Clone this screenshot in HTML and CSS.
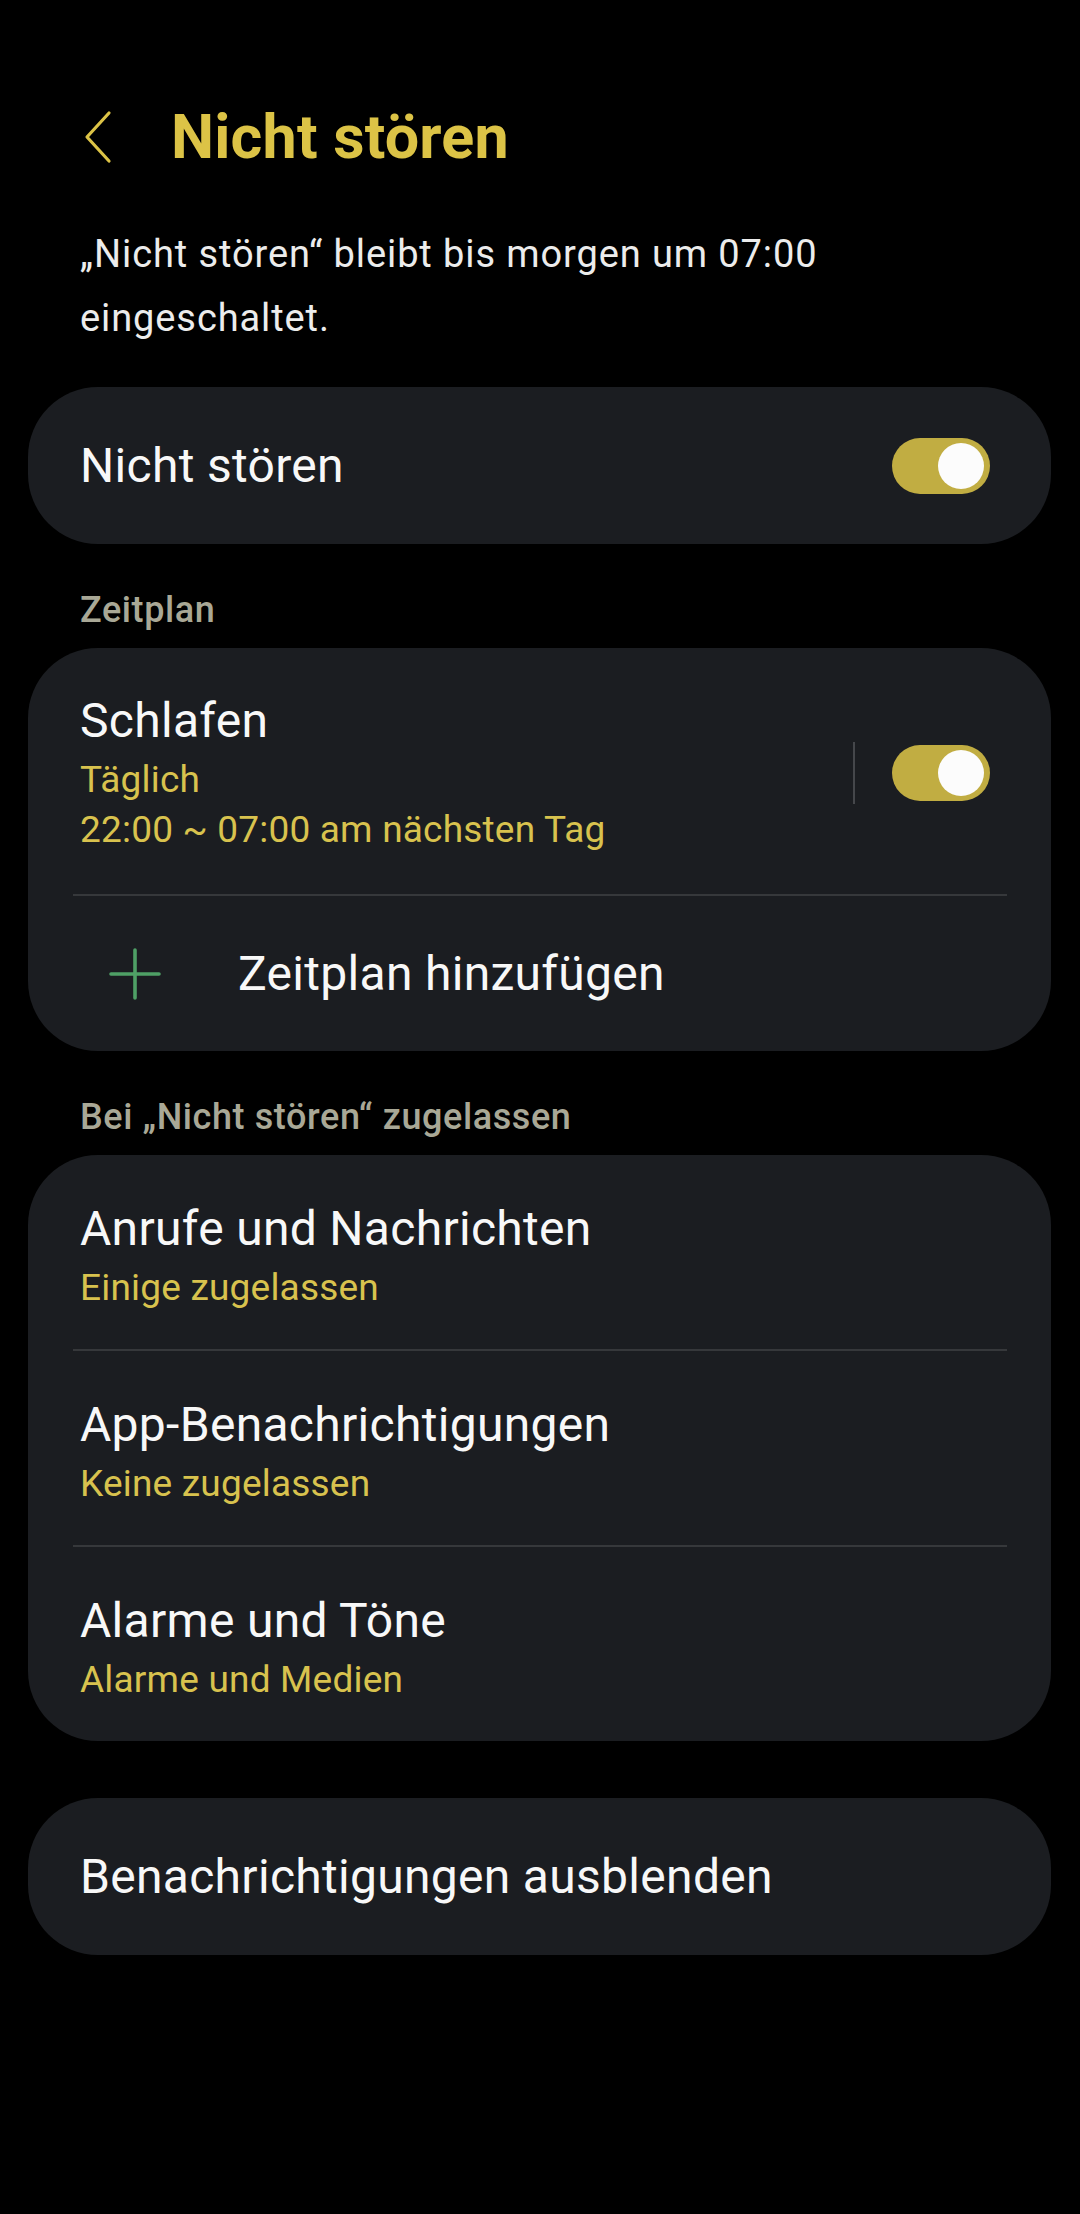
FILE: index.html
```html
<!DOCTYPE html>
<html lang="de">
<head>
<meta charset="utf-8">
<title>Nicht stören</title>
<link rel="stylesheet" href="styles.css">
</head>
<body>
<div class="screen">
  <header class="appbar">
    <svg class="back" width="28" height="54" viewBox="0 0 28 54" aria-hidden="true">
      <path d="M25 3 L3 27 L25 51" fill="none" stroke="#dcc346" stroke-width="3.2" stroke-linecap="round" stroke-linejoin="round"/>
    </svg>
    <h1 class="title">Nicht stören</h1>
  </header>

  <p class="desc">„Nicht stören“ bleibt bis morgen um 07:00 eingeschaltet.</p>

  <section class="card">
    <div class="row row-single">
      <span class="item-title">Nicht stören</span>
      <span class="switch"><span class="knob"></span></span>
    </div>
  </section>

  <h2 class="section-label">Zeitplan</h2>
  <section class="card">
    <div class="row row-item">
      <div class="texts">
        <div class="item-title">Schlafen</div>
        <div class="item-sub first">Täglich</div>
        <div class="item-sub">22:00 ~ 07:00 am nächsten Tag</div>
      </div>
      <span class="vdivider"></span>
      <span class="switch"><span class="knob"></span></span>
    </div>
    <div class="divider"></div>
    <div class="row row-add">
      <svg class="plus" width="52" height="52" viewBox="0 0 52 52" aria-hidden="true">
        <path d="M26 2 V50 M2 26 H50" fill="none" stroke="#4fa066" stroke-width="3.6" stroke-linecap="round"/>
      </svg>
      <span class="item-title">Zeitplan hinzufügen</span>
    </div>
  </section>

  <h2 class="section-label">Bei „Nicht stören“ zugelassen</h2>
  <section class="card card-list">
    <div class="row row-item">
      <div class="texts">
        <div class="item-title">Anrufe und Nachrichten</div>
        <div class="item-sub first">Einige zugelassen</div>
      </div>
    </div>
    <div class="divider"></div>
    <div class="row row-item">
      <div class="texts">
        <div class="item-title">App-Benachrichtigungen</div>
        <div class="item-sub first">Keine zugelassen</div>
      </div>
    </div>
    <div class="divider"></div>
    <div class="row row-item">
      <div class="texts">
        <div class="item-title">Alarme und Töne</div>
        <div class="item-sub first">Alarme und Medien</div>
      </div>
    </div>
  </section>

  <section class="card card-last">
    <div class="row row-single">
      <span class="item-title">Benachrichtigungen ausblenden</span>
    </div>
  </section>
</div>
</body>
</html>
```

FILE: styles.css
```css
html, body {
  margin: 0;
  padding: 0;
  background: #000;
}

body {
  font-family: Roboto, "Noto Sans", "Liberation Sans", sans-serif;
  color: #f7f7f7;
  width: 1080px;
  min-height: 2214px;
}

.screen {
  display: flex;
  flex-direction: column;
  padding: 0 29px 0 28px;
}

.appbar {
  display: flex;
  align-items: center;
  height: 70px;
  padding-top: 102px;
  padding-left: 56px;
}

.back {
  display: block;
  flex: none;
}

.title {
  margin: 0 0 0 59px;
  font-size: 61px;
  line-height: 70px;
  font-weight: 700;
  color: #dcc346;
  letter-spacing: 0.2px;
}

.desc {
  margin: 50px 0 37px;
  padding: 0 52px;
  font-size: 38px;
  line-height: 64px;
  color: #ececec;
  letter-spacing: 0.9px;
}

.card {
  background: #1b1d21;
  border-radius: 70px;
  overflow: hidden;
}

.card-last {
  margin-top: 57px;
}

.row {
  display: flex;
  align-items: center;
  padding: 0 61px 0 52px;
}

.row-single {
  min-height: 157px;
}

.row-item {
  padding-top: 43px;
  padding-bottom: 39px;
}

.card-list .row-item {
  padding-top: 44px;
  padding-bottom: 36px;
}

.texts {
  flex: 1;
  min-width: 0;
}

.item-title {
  font-size: 48px;
  line-height: 60px;
  color: #f8f8f8;
  letter-spacing: 0.3px;
}

.item-sub {
  font-size: 37px;
  line-height: 50px;
  color: #d8c24e;
  letter-spacing: 0.2px;
}

.item-sub.first {
  margin-top: 4px;
}

.row-single .item-title {
  flex: 1;
}

.switch {
  position: relative;
  flex: none;
  width: 98px;
  height: 56px;
  border-radius: 28px;
  background: #c1ad42;
}

.knob {
  position: absolute;
  top: 5px;
  right: 6px;
  width: 46px;
  height: 46px;
  border-radius: 50%;
  background: #fcfcfc;
}

.vdivider {
  flex: none;
  width: 2px;
  height: 62px;
  background: #45474b;
  margin-right: 37px;
}

.divider {
  height: 2px;
  margin: 0 44px 0 45px;
  background: #36383b;
}

.row-add {
  min-height: 155px;
}

.plus {
  display: block;
  flex: none;
  margin-left: 29px;
  margin-right: 77px;
}

.section-label {
  margin: 42px 0 14px;
  padding-left: 52px;
  font-size: 36px;
  line-height: 48px;
  font-weight: 500;
  color: #a9a896;
  letter-spacing: 0.6px;
}
```
